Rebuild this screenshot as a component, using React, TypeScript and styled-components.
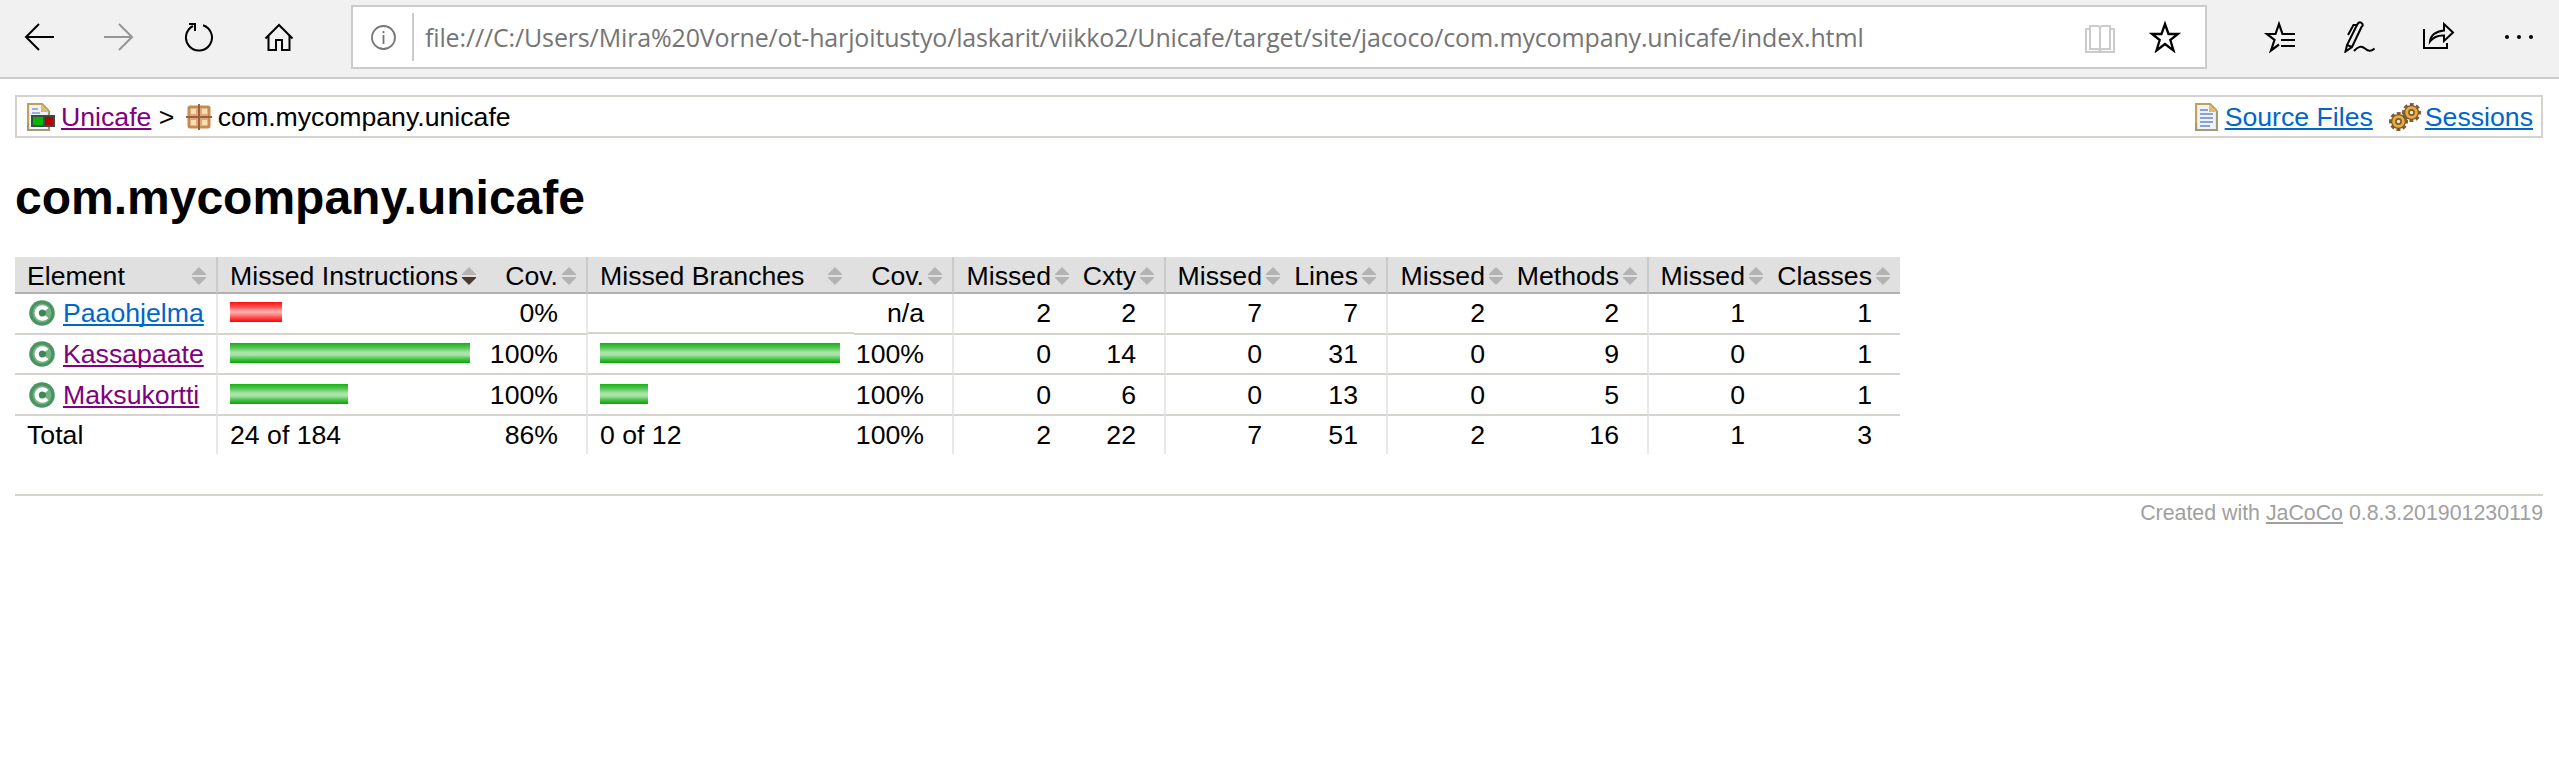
import React from 'react';
import styled, { createGlobalStyle, css } from 'styled-components';

const Global = createGlobalStyle`
  body { margin: 0; background: #fff; color: #000; font-family: "Liberation Sans", Arial, sans-serif; font-size: 26.67px; }
  * { box-sizing: border-box; }
  svg { display: block; flex: none; }
`;

const Toolbar = styled.div`
  display: flex; align-items: flex-start; height: 79px;
  background: #f1f1f1; border-bottom: 2px solid #cbcbcb;
`;
const NavGroup = styled.div`display: flex; width: 351px; padding: 22px 0 0 24px; gap: 48px;`;
const AddressBar = styled.div`
  display: flex; align-items: center; width: 1856px; height: 64px; margin-top: 5px;
  background: #fff; border: 2px solid #cbcbcb; padding-left: 18px;
`;
const Divider = styled.div`width: 2px; height: 48px; background: #cbcbcb; margin: 0 11px 0 16px;`;
const Url = styled.div`
  flex: 1; font-family: "Open Sans", "Noto Sans", sans-serif; font-size: 25px; line-height: 34px;
  color: #757575; white-space: nowrap; letter-spacing: -0.145px;
`;
const FieldIcons = styled.div`display: flex; gap: 34px; padding-right: 24px;`;
const Actions = styled.div`display: flex; padding: 21px 0 0 56px; gap: 48px;`;

const Page = styled.main`padding: 16px 16px 0 15px;`;
const Crumbs = styled.nav`
  display: flex; align-items: center; height: 43px; border: 2px solid #d6d3ce; padding: 0 8px 0 10px;
  line-height: 30px; white-space: pre;
`;
const Link = styled.a<{ $visited?: boolean }>`
  color: ${p => (p.$visited ? '#800080' : '#0066cc')};
  text-decoration: underline; text-decoration-thickness: 2px; text-underline-offset: 2px;
  text-decoration-skip-ink: none;
`;
const CrumbIcon = styled.span<{ $left?: number; $right?: number }>`
  margin: 0 ${p => p.$right ?? 0}px 0 ${p => p.$left ?? 0}px;
`;
const Spacer = styled.span`flex: 1;`;
const Title = styled.h1`font-size: 48px; line-height: 56px; font-weight: bold; margin: 32px 0 31px;`;

const Table = styled.div`width: 1885px;`;
const Row = styled.div<{ $h: number; $head?: boolean }>`
  display: grid; height: ${p => p.$h}px;
  grid-template-columns: 203px 270px 100px 266px 100px 127px 85px 126px 96px 127px 134px 126px 125px;
  ${p => p.$head && css`background: #e0e0e0;`}
`;
type CellProps = { $sep?: boolean; $last?: boolean; $num?: boolean; $line?: string; $pad?: number; $short?: boolean };
const Cell = styled.div<CellProps>`
  display: flex; align-items: flex-start; white-space: nowrap; line-height: 30px;
  justify-content: ${p => (p.$num ? 'flex-end' : 'flex-start')};
  padding: ${p => p.$pad ?? 4}px ${p => (p.$num ? (p.$sep || p.$last ? 28 : 30) : 0)}px 0 ${p => (p.$num ? 0 : 12)}px;
  border-right: ${p => (p.$sep ? '2px solid #e8e8e8' : '0')};
  border-bottom: ${p => (p.$line ? `2px solid ${p.$line}` : '0')};
  margin-bottom: ${p => (p.$short ? 1 : 0)}px;
`;
const HeadCell = styled(Cell)`
  justify-content: ${p => (p.$num ? 'flex-end' : 'space-between')};
  padding-right: ${p => (p.$sep || p.$last ? 10 : 12)}px;
  gap: 4px;
  border-right-color: #cacaca;
`;
const SortMark = styled.span`padding-top: 6px;`;
const Bar = styled.div<{ $color: 'red' | 'green'; $w: number }>`
  width: ${p => p.$w}px; height: 20px; margin-top: 4px;
  background: ${p =>
    p.$color === 'red'
      ? 'linear-gradient(#ff0f0f, #ff5a5a 28%, #ffabab 46%, #ffabab 54%, #ff5a5a 74%, #ff0000)'
      : 'linear-gradient(#12b212, #5ac75a 25%, #a8e4a8 46%, #a8e4a8 60%, #5ac75a 76%, #00a800)'};
`;
const ClassName = styled.span`display: flex; gap: 8px;`;
const ClassIconBox = styled.span`padding: 2px 0 0 2px;`;
const Footer = styled.footer`
  margin-top: 40px; border-top: 2px solid #d6d3ce; padding-top: 5px; text-align: right;
  font-size: 21.33px; line-height: 24px; color: #a0a0a0;
`;
const FooterLink = styled(Link)`color: #a0a0a0;`;

const Sort = ({ active }: { active?: boolean }) => (
  <svg width="14" height="18" viewBox="0 0 14 18">
    <path d="M7 0 14 7v1H0V7z" fill="#b3b3b3" />
    <path d="M0 10h14v1l-7 7-7-7z" fill={active ? '#4b3a2c' : '#b3b3b3'} />
  </svg>
);

const ClassIcon = () => (
  <svg width="26" height="26" viewBox="0 0 26 26">
    <circle cx="13" cy="13" r="12.8" fill="#4a9461" />
    <circle cx="13" cy="13" r="9.4" fill="#76b085" />
    <circle cx="13" cy="13" r="4" fill="#3d8856" />
    <path d="M17.8 9.400A5.700 5.700 0 1 0 17.800 16.600" fill="none" stroke="#fff" strokeWidth="4.200" />
  </svg>
);

const DocIcon = ({ report }: { report?: boolean }) => (
  <svg width={report ? 28 : 23} height="28" viewBox={report ? '0 0 28 28' : '0 0 23 28'}>
    <path d="M1 1h14l7 7v19H1z" fill="#edf2fb" />
    <path d="M1 27V1h14l7 7" fill="none" stroke="#c2a054" strokeWidth="2.200" />
    <path d="M1 20v7h21V8" fill="none" stroke="#a39a72" strokeWidth="2.200" />
    <path d="M14 2v7h7z" fill="#e3b964" />
    {report ? (
      <>
        <path d="M5 6h6M5 10h8" stroke="#9db1d8" strokeWidth="2" />
        <path d="M4 12h24v12H4z" fill="#3c4a48" />
        <path d="M6 14h10v8H6z" fill="#00b800" />
        <path d="M18 14h8v8h-8z" fill="#b40000" />
      </>
    ) : (
      <path d="M5 7h8M5 11h13M5 15h13M5 19h13M5 23h10" stroke="#8ba2d0" strokeWidth="2" />
    )}
  </svg>
);

const PackageIcon = () => (
  <svg width="26" height="26" viewBox="0 0 26 26">
    <rect x="3" y="3" width="20" height="20" rx="1" fill="#f7dfb0" stroke="#c88a55" strokeWidth="3" />
    <path d="M13 4v18M4 13h18" stroke="#e0a878" strokeWidth="6" />
    <path d="M13 0v26M0 13h26" stroke="#9c6040" strokeWidth="2" />
  </svg>
);

const Gear = ({ x, y }: { x: number; y: number }) => (
  <g transform={`translate(${x} ${y})`}>
    <circle r="8" fill="none" stroke="#80592f" strokeWidth="3" strokeDasharray="3.800 2.483" strokeDashoffset="1.900" />
    <circle r="7.600" fill="#80592f" />
    <circle r="6.200" fill="#e6ae3e" />
    <circle r="2.600" fill="#f3e6c8" stroke="#80592f" strokeWidth="1.600" />
  </g>
);
const GearsIcon = () => (
  <svg width="32" height="28" viewBox="0 0 32 28">
    <Gear x={9.5} y={18.5} />
    <Gear x={22.5} y={9.5} />
  </svg>
);

const Stroke = ({ w = 32, color = '#000', children }: { w?: number; color?: string; children: React.ReactNode }) => (
  <svg width={w} height="32" viewBox={`0 0 ${w} 32`} fill="none" stroke={color} strokeWidth="2">
    {children}
  </svg>
);

const headers: { label: string; num?: boolean; sep?: boolean; active?: boolean }[] = [
  { label: 'Element', sep: true },
  { label: 'Missed Instructions', active: true },
  { label: 'Cov.', num: true, sep: true },
  { label: 'Missed Branches' },
  { label: 'Cov.', num: true, sep: true },
  { label: 'Missed', num: true },
  { label: 'Cxty', num: true, sep: true },
  { label: 'Missed', num: true },
  { label: 'Lines', num: true, sep: true },
  { label: 'Missed', num: true },
  { label: 'Methods', num: true, sep: true },
  { label: 'Missed', num: true },
  { label: 'Classes', num: true },
];

type Item = {
  name: string; visited?: boolean; h: number; pad: number;
  instr: ['red' | 'green', number]; cov: string; branch: number; bcov: string; n: number[];
};
const items: Item[] = [
  { name: 'Paaohjelma', h: 41, pad: 4, instr: ['red', 52], cov: '0%', branch: 0, bcov: 'n/a', n: [2, 2, 7, 7, 2, 2, 1, 1] },
  { name: 'Kassapaate', visited: true, h: 40, pad: 4, instr: ['green', 240], cov: '100%', branch: 240, bcov: '100%', n: [0, 14, 0, 31, 0, 9, 0, 1] },
  { name: 'Maksukortti', visited: true, h: 41, pad: 5, instr: ['green', 118], cov: '100%', branch: 48, bcov: '100%', n: [0, 6, 0, 13, 0, 5, 0, 1] },
];
const LINE = '#d6d3ce';

const Numbers = ({ values, pad, line }: { values: number[]; pad: number; line?: string }) => (
  <>
    {values.map((v, i) => (
      <Cell key={i} $num $pad={pad} $line={line} $sep={i % 2 === 1 && i < 7} $last={i === 7}>{v}</Cell>
    ))}
  </>
);

export default function App() {
  return (
    <>
      <Global />
      <Toolbar>
        <NavGroup>
          <Stroke w={31}><path d="M30 15H2M15 2 2 15l13 13" /></Stroke>
          <Stroke w={31} color="#959595"><path d="M1 15h28M16 2l13 13-13 13" /></Stroke>
          <Stroke w={31}><path d="M21 3.200A13 13 0 1 1 11 4M7 2h6v7" /></Stroke>
          <Stroke w={33}><path d="M4.500 16.500 18 3 31.500 16.500M7.500 14v14H15V18h6v10h7.500V14" /></Stroke>
        </NavGroup>
        <AddressBar>
          <svg width="25" height="25" viewBox="0 0 25 25" fill="none" stroke="#757575" strokeWidth="1.800">
            <circle cx="12.500" cy="12.500" r="11.500" /><path d="M12.500 10v9M12.500 6v2.200" />
          </svg>
          <Divider />
          <Url>file:///C:/Users/Mira%20Vorne/ot-harjoitustyo/laskarit/viikko2/Unicafe/target/site/jacoco/com.mycompany.unicafe/index.html</Url>
          <FieldIcons>
            <Stroke w={30} color="#cbcbcb"><path d="M5 8H1v23h28V8h-4M5 5h7q3 0 3 2 0-2 3-2h7v23h-7q-3 0-3 2 0-2-3-2H5zM15 6v24" /></Stroke>
            <Stroke><path d="M16 3l3.500 10H29l-7.700 6 3.200 10.500L16 23l-8.500 6.500L10.700 19 3 13h9.500z" strokeWidth="2.300" /></Stroke>
          </FieldIcons>
        </AddressBar>
        <Actions>
          <Stroke><path d="M32 13H19.500L16 3l-3.500 10H4l7.500 6L8 29.500l8-6M18 19h14M18 25h14" strokeWidth="2.200" /></Stroke>
          <Stroke><path d="M2.500 30.500 4 24 14 4q2-4 4.500-2t0 4L9 26zM4 24l5 2M5 14l5.500-10H14M11 30q6-7 11-2.500t9.500 0" /></Stroke>
          <Stroke><path d="M1 8v19h23v-5M7 20.500Q8 11 21 9.500V3l9 8.500L21 20v-5.500Q12 14 7 20.500z" /></Stroke>
          <svg width="32" height="32" viewBox="0 0 32 32"><circle cx="4" cy="16" r="2" /><circle cx="16" cy="16" r="2" /><circle cx="28" cy="16" r="2" /></svg>
        </Actions>
      </Toolbar>
      <Page>
        <Crumbs>
          <CrumbIcon $right={6}><DocIcon report /></CrumbIcon>
          <Link $visited>Unicafe</Link>
          <span>{' > '}</span>
          <CrumbIcon $left={4} $right={6}><PackageIcon /></CrumbIcon>
          <span>com.mycompany.unicafe</span>
          <Spacer />
          <CrumbIcon $right={7}><DocIcon /></CrumbIcon>
          <Link>Source Files</Link>
          <CrumbIcon $left={16} $right={4}><GearsIcon /></CrumbIcon>
          <Link>Sessions</Link>
        </Crumbs>
        <Title>com.mycompany.unicafe</Title>
        <Table>
          <Row $h={37} $head>
            {headers.map((h, i) => (
              <HeadCell key={i} $num={h.num} $sep={h.sep} $last={i === 12} $line="#b0b0b0" $pad={4}>
                {h.label}
                <SortMark><Sort active={h.active} /></SortMark>
              </HeadCell>
            ))}
          </Row>
          {items.map(it => (
            <Row key={it.name} $h={it.h}>
              <Cell $sep $line={LINE} $pad={it.pad}>
                <ClassName>
                  <ClassIconBox><ClassIcon /></ClassIconBox>
                  <Link $visited={it.visited}>{it.name}</Link>
                </ClassName>
              </Cell>
              <Cell $line={LINE} $pad={it.pad}><Bar $color={it.instr[0]} $w={it.instr[1]} /></Cell>
              <Cell $num $sep $line={LINE} $pad={it.pad}>{it.cov}</Cell>
              <Cell $line={LINE} $pad={it.pad} $short={!it.branch}>
                {it.branch > 0 && <Bar $color="green" $w={it.branch} />}
              </Cell>
              <Cell $num $sep $line={LINE} $pad={it.pad}>{it.bcov}</Cell>
              <Numbers values={it.n} pad={it.pad} line={LINE} />
            </Row>
          ))}
          <Row $h={38}>
            <Cell $sep>Total</Cell>
            <Cell>24 of 184</Cell>
            <Cell $num $sep>86%</Cell>
            <Cell>0 of 12</Cell>
            <Cell $num $sep>100%</Cell>
            <Numbers values={[2, 22, 7, 51, 2, 16, 1, 3]} pad={4} />
          </Row>
        </Table>
        <Footer>Created with <FooterLink>JaCoCo</FooterLink> 0.8.3.201901230119</Footer>
      </Page>
    </>
  );
}
